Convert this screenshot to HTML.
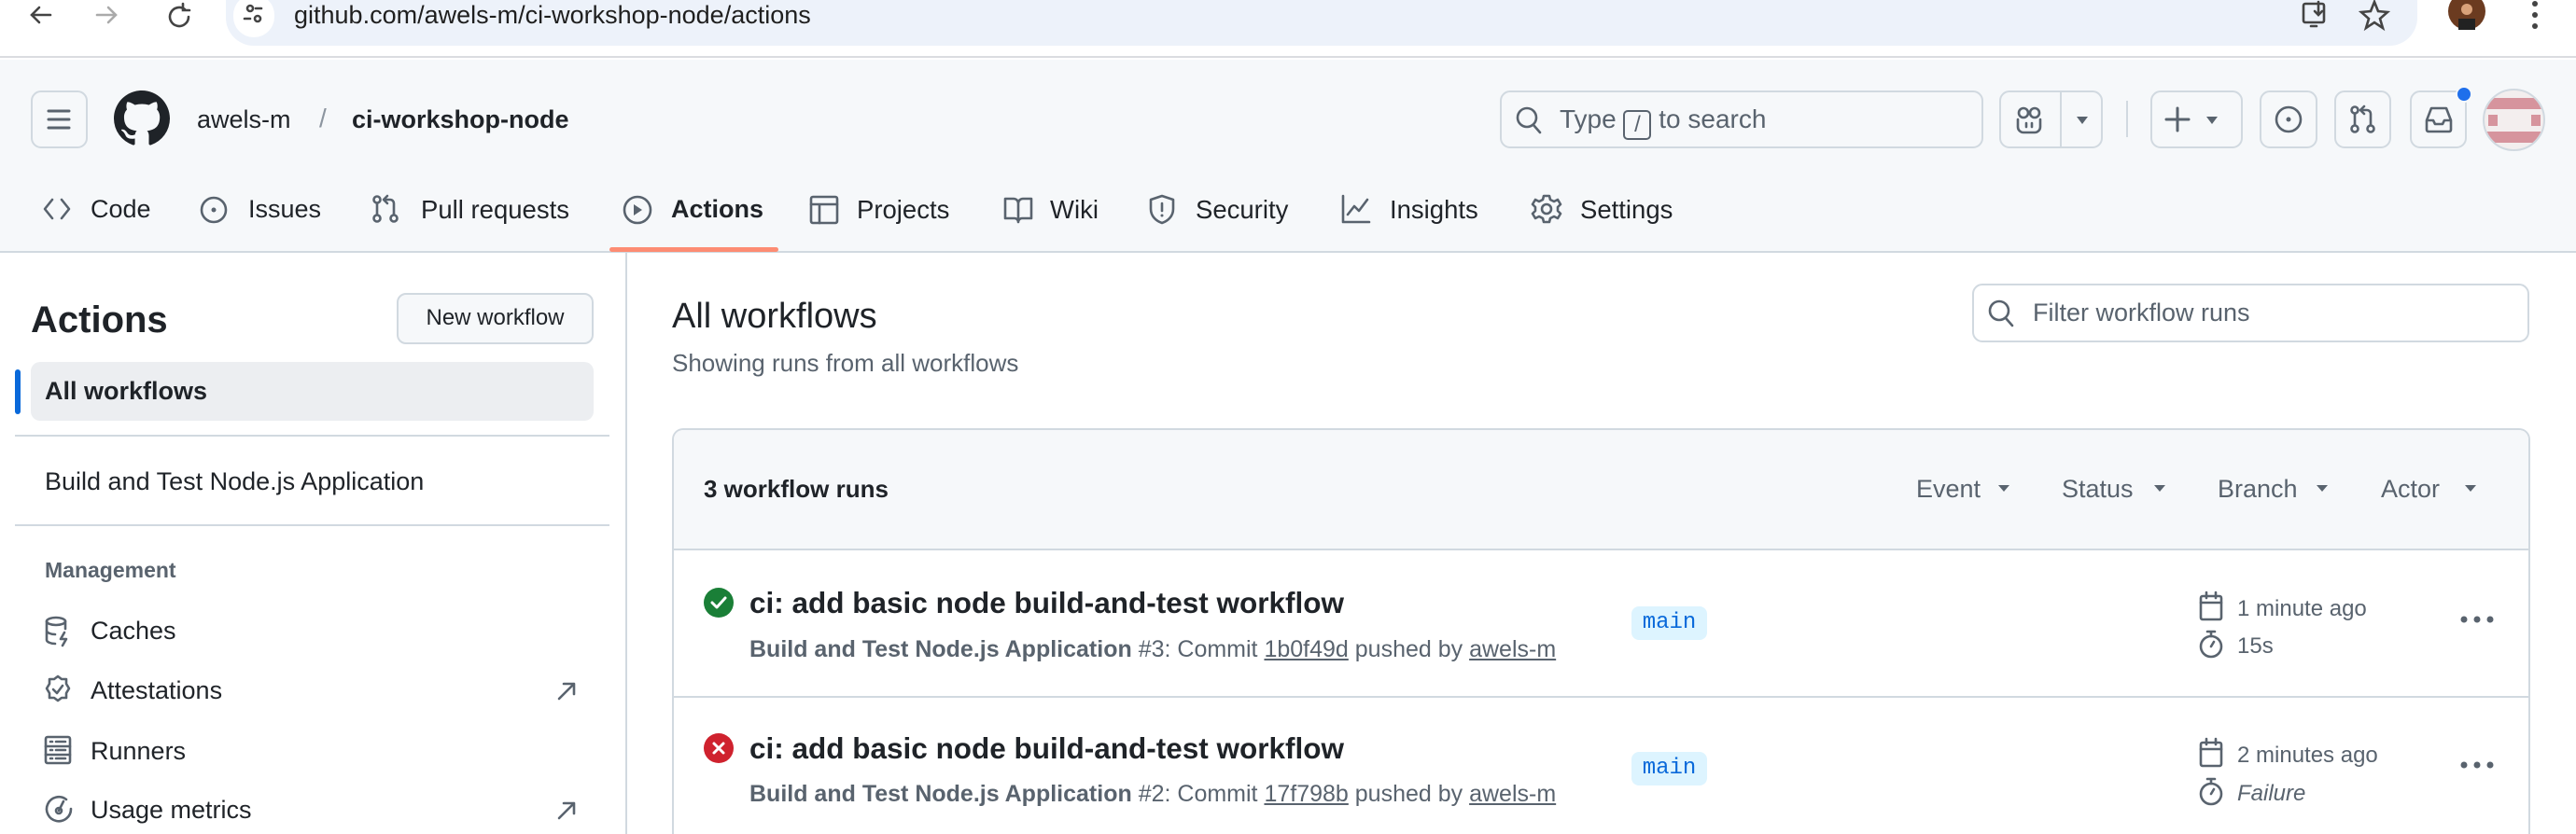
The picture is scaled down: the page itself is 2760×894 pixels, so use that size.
<!DOCTYPE html>
<html><head><meta charset="utf-8"><style>
*{box-sizing:border-box;margin:0;padding:0}
html,body{width:2760px;height:894px;overflow:hidden}
body{background:#fff;font-family:"Liberation Sans",sans-serif;color:#1f2328;position:relative}
.a{position:absolute}
.t{position:absolute;white-space:nowrap;line-height:1}
svg{position:absolute;overflow:visible}
.btn{position:absolute;border:2px solid #d1d9e0;border-radius:11px;background:#f6f8fa}
.g{color:#59636e}
.ic{fill:none;stroke:#59636e;stroke-width:2.6;stroke-linecap:round;stroke-linejoin:round}
</style></head><body>
<div class="a" style="left:0;top:0;width:2760px;height:62px;background:#fff;border-bottom:2px solid #dadce0"></div>
<div class="a" style="left:242px;top:-10px;width:2348px;height:59px;background:#edf2fa;border-radius:0 0 30px 30px"></div>
<div class="a" style="left:250px;top:-6px;width:44px;height:46px;background:#fff;border-radius:22px"></div>
<svg style="left:0;top:0" width="2760" height="60">
<g fill="none" stroke="#444" stroke-width="2.6" stroke-linecap="round">
<path d="M54 16H34M42 8l-8 8 8 8"/>
<path d="M104 16h20M116 8l8 8-8 8" stroke="#aaa"/>
<path d="M198 10a10 10 0 1 0 4 8M196 4v7h7"/>
<circle cx="268" cy="9" r="3"/><path d="M274 9h6M262 20h6"/><circle cx="276" cy="20" r="3"/>
<rect x="2468" y="4" width="22" height="20" rx="2"/><path d="M2476 28h6M2484 2v14M2480 12l4 4 4-4"/>
<path d="M2544 2l4 10 10 1-8 7 3 10-9-6-9 6 3-10-8-7 10-1z"/>
</g>
<circle cx="2643" cy="12" r="20" fill="#6b3b20"/><circle cx="2643" cy="10" r="6" fill="#d9a27a"/><path d="M2634 32v-12h18v12z" fill="#222"/>
<g fill="#444"><circle cx="2716" cy="4" r="3"/><circle cx="2716" cy="16" r="3"/><circle cx="2716" cy="28" r="3"/></g>
</svg>
<div class="t" style="left:315px;top:3px;font-size:27px;color:#1f1f1f">github.com/awels-m/ci-workshop-node/actions</div>

<div class="a" style="left:0;top:64px;width:2760px;height:207px;background:#f6f8fa;border-bottom:2px solid #d1d9e0"></div>
<div class="btn" style="left:33px;top:97px;width:61px;height:62px;background:#f6f8fa"></div>
<svg style="left:50px;top:116px" width="28" height="24"><path d="M2 3h22M2 12h22M2 21h22" stroke="#59636e" stroke-width="3" stroke-linecap="round"/></svg>
<svg style="left:122px;top:97px" width="60" height="60" viewBox="0 0 16 16"><path fill="#1f2328" d="M8 0c4.42 0 8 3.58 8 8a8.013 8.013 0 0 1-5.45 7.59c-.4.08-.55-.17-.55-.38 0-.27.01-1.13.01-2.2 0-.75-.25-1.23-.54-1.48 1.78-.2 3.65-.88 3.650-3.95 0-.88-.31-1.59-.82-2.15.08-.2.36-1.02-.08-2.12 0 0-.67-.22-2.2.82-.64-.18-1.32-.27-2-.27-.68 0-1.36.09-2 .27-1.53-1.03-2.2-.82-2.2-.82-.44 1.1-.16 1.92-.08 2.12-.51.56-.82 1.28-.82 2.15 0 3.06 1.86 3.75 3.64 3.95-.23.2-.44.55-.51 1.07-.46.21-1.61.55-2.33-.66-.15-.24-.6-.83-1.23-.82-.67.01-.27.38.01.53.34.19.73.9.82 1.13.16.45.68 1.31 2.69.94 0 .67.01 1.3.01 1.49 0 .21-.15.45-.55.38A7.995 7.995 0 0 1 0 8c0-4.42 3.58-8 8-8Z"/></svg>
<div class="t" style="left:211px;top:115px;font-size:27px">awels-m</div>
<div class="t g" style="left:342px;top:113px;font-size:28px;color:#8c959f">/</div>
<div class="t" style="left:377px;top:115px;font-size:27px;font-weight:bold">ci-workshop-node</div>

<div class="btn" style="left:1607px;top:97px;width:518px;height:62px;background:#f6f8fa"></div>
<svg style="left:1624px;top:114px" width="28" height="30"><circle cx="12" cy="12" r="10" class="ic"/><path d="M19 20l7 8" class="ic"/></svg>
<div class="t g" style="left:1671px;top:114px;font-size:28px">Type <span style="display:inline-block;border:2px solid #59636e;border-radius:5px;width:30px;height:32px;text-align:center;font-size:24px;line-height:28px;vertical-align:-4px">/</span> to search</div>
<div class="btn" style="left:2142px;top:97px;width:111px;height:62px"></div>
<div class="a" style="left:2207px;top:99px;width:2px;height:58px;background:#d1d9e0"></div>
<svg style="left:2160px;top:114px" width="30" height="30"><rect x="3" y="2" width="10" height="10" rx="5" class="ic"/><rect x="15" y="2" width="10" height="10" rx="5" class="ic"/><path d="M2 14v8a6 6 0 0 0 6 6h12a6 6 0 0 0 6-6v-8M11 18v4M17 18v4" class="ic"/></svg>
<svg style="left:2224px;top:124px" width="14" height="10"><path d="M1 1h12l-6 8z" fill="#59636e"/></svg>
<div class="a" style="left:2278px;top:108px;width:2px;height:39px;background:#d1d9e0"></div>
<div class="btn" style="left:2304px;top:97px;width:99px;height:62px"></div>
<svg style="left:2320px;top:114px" width="26" height="28"><path d="M13 2v24M1 14h24" stroke="#59636e" stroke-width="3" stroke-linecap="round"/></svg>
<svg style="left:2363px;top:124px" width="14" height="10"><path d="M1 1h12l-6 8z" fill="#59636e"/></svg>
<div class="btn" style="left:2421px;top:97px;width:62px;height:62px"></div>
<svg style="left:2436px;top:112px" width="32" height="32"><circle cx="16" cy="16" r="13" class="ic"/><circle cx="16" cy="16" r="2.5" fill="#59636e"/></svg>
<div class="btn" style="left:2501px;top:97px;width:61px;height:62px"></div>
<svg style="left:2516px;top:112px" width="32" height="32"><circle cx="7" cy="6" r="3.5" class="ic"/><circle cx="7" cy="26" r="3.5" class="ic"/><circle cx="24" cy="26" r="3.5" class="ic"/><path d="M7 10v12M24 22V10a4 4 0 0 0-4-4h-6M17 2l-4 4 4 4" class="ic"/></svg>
<div class="btn" style="left:2582px;top:97px;width:61px;height:62px"></div>
<svg style="left:2597px;top:113px" width="32" height="32"><path d="M3 16l5-13h16l5 13v10a2 2 0 0 1-2 2H5a2 2 0 0 1-2-2zM3 16h7l2 4h8l2-4h7" class="ic"/></svg>
<div class="a" style="left:2631px;top:92px;width:18px;height:18px;border-radius:9px;background:#1f6feb;border:2px solid #f6f8fa"></div>
<div class="a" style="left:2660px;top:95px;width:67px;height:67px;border-radius:50%;border:2px solid #d1d9e0;overflow:hidden;background:#f3eeee">
<div class="a" style="left:0;top:8px;width:67px;height:12px;background:#d6949d"></div>
<div class="a" style="left:0;top:44px;width:67px;height:12px;background:#d6949d"></div>
<div class="a" style="left:4px;top:26px;width:10px;height:12px;background:#d6949d"></div>
<div class="a" style="left:50px;top:26px;width:10px;height:12px;background:#d6949d"></div>
</div>

<svg style="left:46px;top:210px" width="30" height="28"><path d="M10 4L2 14l8 10M20 4l8 10-8 10" class="ic"/></svg>
<div class="t" style="left:97px;top:211px;font-size:27px">Code</div>
<svg style="left:214px;top:210px" width="30" height="30"><circle cx="15" cy="15" r="13" class="ic"/><circle cx="15" cy="15" r="2.5" fill="#59636e"/></svg>
<div class="t" style="left:266px;top:211px;font-size:27px">Issues</div>
<svg style="left:398px;top:208px" width="32" height="32"><circle cx="6" cy="6" r="3.5" class="ic"/><circle cx="6" cy="26" r="3.5" class="ic"/><circle cx="24" cy="26" r="3.5" class="ic"/><path d="M6 10v12M24 22V10a4 4 0 0 0-4-4h-6M17 2l-4 4 4 4" class="ic"/></svg>
<div class="t" style="left:451px;top:211px;font-size:27.5px">Pull requests</div>
<svg style="left:667px;top:209px" width="32" height="32"><circle cx="16" cy="16" r="14" class="ic"/><path d="M12 10v12l9-6z" fill="#59636e"/></svg>
<div class="t" style="left:719px;top:211px;font-size:27px;font-weight:bold">Actions</div>
<div class="a" style="left:653px;top:265px;width:181px;height:5px;background:#fd8c73;border-radius:3px"></div>
<svg style="left:867px;top:209px" width="32" height="32"><rect x="2" y="2" width="28" height="28" rx="2" class="ic"/><path d="M2 10h28M11 10v20" class="ic"/></svg>
<div class="t" style="left:918px;top:211px;font-size:27.5px">Projects</div>
<svg style="left:1075px;top:210px" width="32" height="30"><path d="M2 3h9a5 5 0 0 1 5 5v20a4 4 0 0 0-4-4H2zM30 3h-9a5 5 0 0 0-5 5v20a4 4 0 0 1 4-4h10z" class="ic"/></svg>
<div class="t" style="left:1125px;top:211px;font-size:27.5px">Wiki</div>
<svg style="left:1230px;top:208px" width="30" height="34"><path d="M15 2l12 4v10c0 8-6 13-12 15C9 29 3 24 3 16V6z" class="ic"/><path d="M15 10v8" class="ic"/><circle cx="15" cy="23" r="1.5" fill="#59636e"/></svg>
<div class="t" style="left:1281px;top:211px;font-size:27.5px">Security</div>
<svg style="left:1437px;top:208px" width="32" height="32"><path d="M2 2v28h28M7 22l7-9 5 5 9-12" class="ic"/></svg>
<div class="t" style="left:1489px;top:211px;font-size:27.5px">Insights</div>
<svg style="left:1641px;top:208px" width="32" height="32"><circle cx="16" cy="16" r="5" class="ic"/><path d="M13 2h6l1 4 4 2 4-2 3 5-3 3v4l3 3-3 5-4-2-4 2-1 4h-6l-1-4-4-2-4 2-3-5 3-3v-4L1 11l3-5 4 2 4-2z" class="ic"/></svg>
<div class="t" style="left:1693px;top:211px;font-size:27.5px">Settings</div>

<div class="a" style="left:670px;top:271px;width:2px;height:623px;background:#d1d9e0"></div>
<div class="t" style="left:33px;top:323px;font-size:40px;font-weight:bold">Actions</div>
<div class="btn" style="left:425px;top:314px;width:211px;height:55px;border-radius:10px"></div>
<div class="t" style="left:425px;top:329px;width:211px;text-align:center;font-size:24px">New workflow</div>
<div class="a" style="left:33px;top:388px;width:603px;height:63px;background:#eceef1;border-radius:10px"></div>
<div class="a" style="left:16px;top:396px;width:6px;height:48px;background:#0969da;border-radius:3px"></div>
<div class="t" style="left:48px;top:406px;font-size:27px;font-weight:bold">All workflows</div>
<div class="a" style="left:16px;top:466px;width:637px;height:2px;background:#d1d9e0"></div>
<div class="t" style="left:48px;top:503px;font-size:27px">Build and Test Node.js Application</div>
<div class="a" style="left:16px;top:562px;width:637px;height:2px;background:#d1d9e0"></div>
<div class="t g" style="left:48px;top:600px;font-size:23px;font-weight:bold">Management</div>
<svg style="left:47px;top:660px" width="30" height="34"><ellipse cx="13" cy="6" rx="10" ry="4" class="ic"/><path d="M3 6v20c0 2 4 4 9 4M23 6v8M3 16c0 2 4 4 9 4M22 18l-4 7h6l-4 7" class="ic"/></svg>
<div class="t" style="left:97px;top:663px;font-size:27px">Caches</div>
<svg style="left:47px;top:723px" width="30" height="34"><path d="M15 2l4 3h5v5l3 5-3 5v5h-5l-4 3-4-3H6v-5l-3-5 3-5V5h5z" class="ic"/><path d="M10 16l4 4 6-8" class="ic"/></svg>
<div class="t" style="left:97px;top:727px;font-size:27px">Attestations</div>
<svg style="left:596px;top:730px" width="22" height="22"><path d="M3 19L19 3M8 3h11v11" class="ic"/></svg>
<svg style="left:47px;top:788px" width="30" height="34"><rect x="2" y="2" width="26" height="28" rx="2" class="ic"/><path d="M2 12h26M2 21h26M7 7h2M13 7h10M7 16h2M13 16h10M7 25h2M13 25h10" class="ic"/></svg>
<div class="t" style="left:97px;top:792px;font-size:27px">Runners</div>
<svg style="left:47px;top:851px" width="32" height="34"><path d="M24 6A13 13 0 1 0 29 16" class="ic"/><path d="M16 18l5-10" class="ic"/><circle cx="16" cy="18" r="3" class="ic"/></svg>
<div class="t" style="left:97px;top:855px;font-size:27px">Usage metrics</div>
<svg style="left:596px;top:858px" width="22" height="22"><path d="M3 19L19 3M8 3h11v11" class="ic"/></svg>

<div class="t" style="left:720px;top:320px;font-size:38px">All workflows</div>
<div class="t g" style="left:720px;top:376px;font-size:26px">Showing runs from all workflows</div>
<div class="a" style="left:2113px;top:304px;width:597px;height:63px;border:2px solid #d1d9e0;border-radius:11px;background:#fff"></div>
<svg style="left:2130px;top:321px" width="28" height="30"><circle cx="12" cy="12" r="10" class="ic"/><path d="M19 20l7 8" class="ic"/></svg>
<div class="t g" style="left:2178px;top:322px;font-size:27px">Filter workflow runs</div>

<div class="a" style="left:720px;top:459px;width:1991px;height:435px;border:2px solid #d1d9e0;border-bottom:none;border-radius:12px 12px 0 0;overflow:hidden">
<div class="a" style="left:0;top:0;width:1991px;height:129px;background:#f6f8fa;border-bottom:2px solid #d1d9e0"></div>
<div class="a" style="left:0;top:285px;width:1991px;height:2px;background:#d1d9e0"></div>
</div>
<div class="t" style="left:754px;top:511px;font-size:26px;font-weight:bold">3 workflow runs</div>
<div class="t g" style="left:2053px;top:511px;font-size:27px">Event</div>
<div class="t g" style="left:2209px;top:511px;font-size:27px">Status</div>
<div class="t g" style="left:2376px;top:511px;font-size:27px">Branch</div>
<div class="t g" style="left:2551px;top:511px;font-size:27px">Actor</div>
<svg style="left:0;top:0" width="2760" height="894"><g fill="#59636e"><path d="M2141 520h12l-6 7z"/><path d="M2308 520h12l-6 7z"/><path d="M2482 520h12l-6 7z"/><path d="M2641 520h12l-6 7z"/></g></svg>

<svg style="left:754px;top:630px" width="32" height="32"><circle cx="16" cy="16" r="16" fill="#1a7f37"/><path d="M9 16l5 5 9-10" fill="none" stroke="#fff" stroke-width="3" stroke-linecap="round" stroke-linejoin="round"/></svg>
<div class="t" style="left:803px;top:631px;font-size:31.5px;font-weight:bold">ci: add basic node build-and-test workflow</div>
<div class="t g" style="left:803px;top:684px;font-size:25px"><b>Build and Test Node.js Application</b> #3: Commit <u>1b0f49d</u> pushed by <u>awels-m</u></div>
<div class="a" style="left:1748px;top:650px;width:81px;height:36px;background:#ddf4ff;border-radius:8px"></div>
<div class="t" style="left:1748px;top:656px;width:81px;text-align:center;font-family:'Liberation Mono',monospace;font-size:24px;color:#0969da">main</div>
<svg style="left:2356px;top:634px" width="26" height="32"><rect x="2" y="5" width="22" height="25" rx="2" class="ic"/><path d="M2 12h22M8 1v6M18 1v6" class="ic"/></svg>
<div class="t g" style="left:2397px;top:641px;font-size:24px">1 minute ago</div>
<svg style="left:2356px;top:675px" width="26" height="32"><circle cx="13" cy="18" r="11" class="ic"/><path d="M9 2h8M13 2v5M13 18l3-5" class="ic"/></svg>
<div class="t g" style="left:2397px;top:681px;font-size:24px">15s</div>
<svg style="left:2636px;top:659px" width="36" height="10"><g fill="#59636e"><circle cx="4" cy="5" r="3.5"/><circle cx="18" cy="5" r="3.5"/><circle cx="32" cy="5" r="3.5"/></g></svg>

<svg style="left:754px;top:786px" width="32" height="32"><circle cx="16" cy="16" r="16" fill="#cf222e"/><path d="M11 11l10 10M21 11l-10 10" fill="none" stroke="#fff" stroke-width="3" stroke-linecap="round"/></svg>
<div class="t" style="left:803px;top:787px;font-size:31.5px;font-weight:bold">ci: add basic node build-and-test workflow</div>
<div class="t g" style="left:803px;top:839px;font-size:25px"><b>Build and Test Node.js Application</b> #2: Commit <u>17f798b</u> pushed by <u>awels-m</u></div>
<div class="a" style="left:1748px;top:806px;width:81px;height:36px;background:#ddf4ff;border-radius:8px"></div>
<div class="t" style="left:1748px;top:812px;width:81px;text-align:center;font-family:'Liberation Mono',monospace;font-size:24px;color:#0969da">main</div>
<svg style="left:2356px;top:791px" width="26" height="32"><rect x="2" y="5" width="22" height="25" rx="2" class="ic"/><path d="M2 12h22M8 1v6M18 1v6" class="ic"/></svg>
<div class="t g" style="left:2397px;top:798px;font-size:24px">2 minutes ago</div>
<svg style="left:2356px;top:833px" width="26" height="32"><circle cx="13" cy="18" r="11" class="ic"/><path d="M9 2h8M13 2v5M13 18l3-5" class="ic"/></svg>
<div class="t g" style="left:2397px;top:839px;font-size:24px;font-style:italic">Failure</div>
<svg style="left:2636px;top:815px" width="36" height="10"><g fill="#59636e"><circle cx="4" cy="5" r="3.5"/><circle cx="18" cy="5" r="3.5"/><circle cx="32" cy="5" r="3.5"/></g></svg>
</body></html>
